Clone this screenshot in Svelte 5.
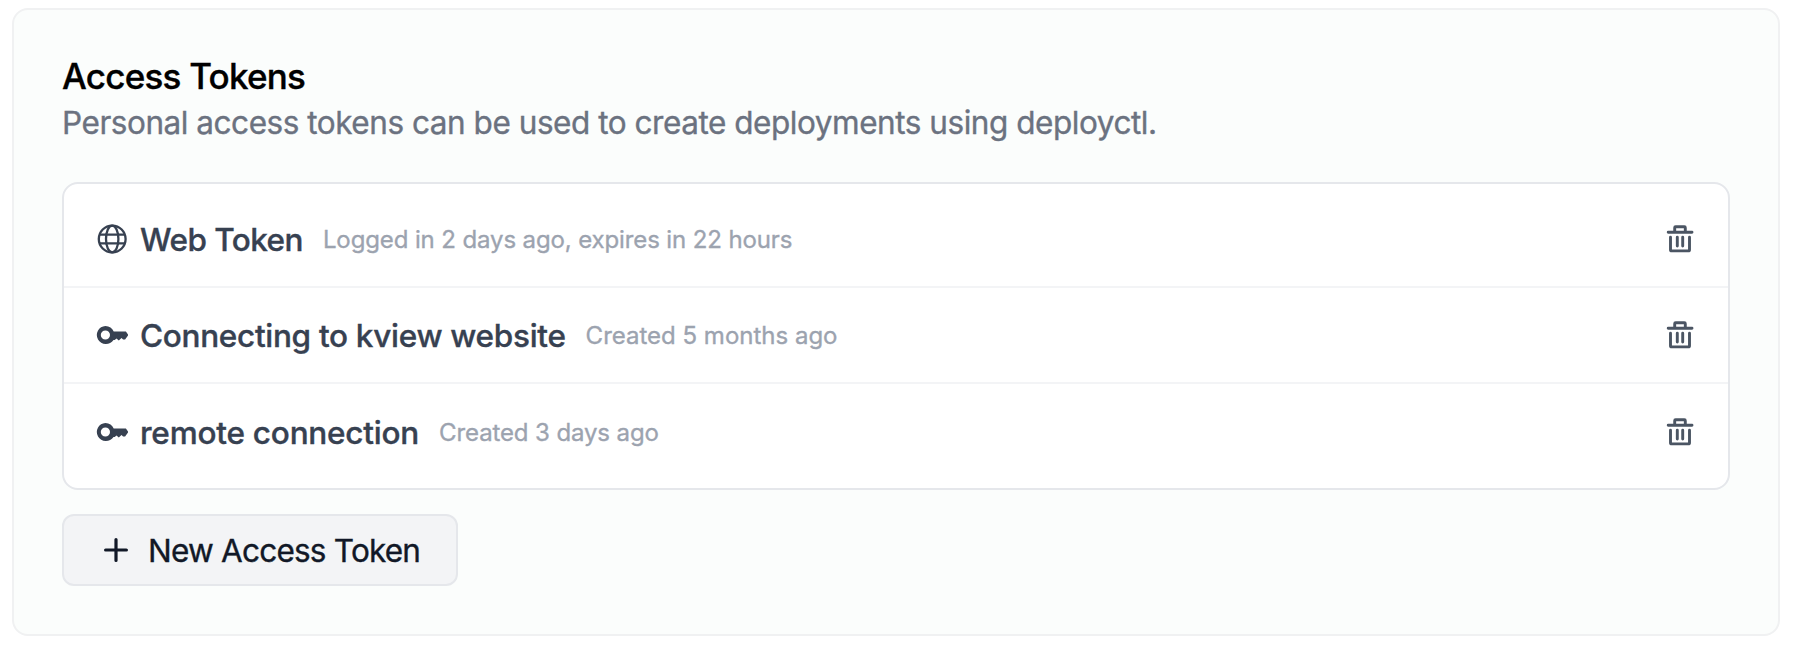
<script>
  const tokens = [
    { icon: 'globe', name: 'Web Token', meta: 'Logged in 2 days ago, expires in 22 hours', tracking: -0.55, metaTracking: -0.12 },
    { icon: 'key', name: 'Connecting to kview website', meta: 'Created 5 months ago', tracking: -0.3, metaTracking: 0 },
    { icon: 'key', name: 'remote connection', meta: 'Created 3 days ago', tracking: -0.22, metaTracking: -0.12 }
  ];
</script>

<section class="card">
  <h2>Access Tokens</h2>
  <p class="desc">Personal access tokens can be used to create deployments using deployctl.</p>

  <ul class="list">
    {#each tokens as token}
      <li>
        {#if token.icon === 'globe'}
          <svg class="icon" viewBox="0 0 32 32" fill="none" stroke="currentColor" stroke-width="2.3">
            <circle cx="16.2" cy="16" r="13.4" />
            <ellipse cx="16.2" cy="16" rx="6.2" ry="13.4" />
            <path d="M3.6 11.7h25.2M3.6 20.3h25.2" />
          </svg>
        {:else}
          <svg class="icon" viewBox="0 0 32 32" fill="currentColor">
            <path transform="translate(.4 .5)" fill-rule="evenodd" d="M9 6.400a9.100 9.100 0 0 1 8.300 5.700h12.200L32 15.600l-3.300 4.300h-2l-1.600-1.400-2.700 2.600-2.300-2.100-1.800 1.500h-1.200A9.100 9.100 0 1 1 9 6.400Zm0 4.500a4.600 4.600 0 1 0 0 9.200 4.600 4.600 0 0 0 0-9.200Z" />
          </svg>
        {/if}
        <span class="name" style:letter-spacing="{token.tracking}px">{token.name}</span>
        <span class="meta" style:letter-spacing="{token.metaTracking}px">{token.meta}</span>
        <button class="delete" aria-label="Delete">
          <svg viewBox="0 0 28 30" fill="none" stroke="currentColor" stroke-width="2.9" stroke-linecap="round" stroke-linejoin="round">
            <path d="M2.200 8.300h23.800M8.700 8V3.700q0-.900.900-.900h8.800q.900 0 .900.900V8M4.500 13.300v12.400q0 1.200 1.200 1.200h16.600q1.200 0 1.200-1.200V13.300M11.300 13.300v8.700M16.700 13.300v8.700" />
          </svg>
        </button>
      </li>
    {/each}
  </ul>

  <button class="add">
    <svg viewBox="0 0 24 24" fill="none" stroke="currentColor" stroke-width="3.2" stroke-linecap="round">
      <path d="M12 1.600v20.800M1.600 12h20.800" />
    </svg>
    <span>New Access Token</span>
  </button>
</section>

<style>
  :global(body) {
    background: #fff;
  }
  .card {
    box-sizing: border-box;
    width: 1768px;
    height: 628px;
    margin: 8px 0 0 12px;
    padding: 45px 48px;
    border: 2px solid #f0f1f2;
    border-radius: 16px;
    background: #fbfdfc;
    font-family: Inter, sans-serif;
    -webkit-text-stroke: 0.35px currentColor;
  }
  h2 {
    margin: 0;
    font-size: 35px;
    font-weight: 500;
    line-height: 42px;
    letter-spacing: -0.76px;
    color: #000;
  }
  .desc {
    margin: 0;
    padding-top: 2px;
    font-size: 31.5px;
    line-height: 48px;
    letter-spacing: -0.46px;
    color: #6b7280;
  }
  .list {
    margin: 35px 0 24px;
    padding: 8px 0;
    list-style: none;
    border: 2px solid #e5e7eb;
    border-radius: 16px;
    background: #fff;
  }
  li {
    box-sizing: border-box;
    display: flex;
    align-items: center;
    height: 96px;
    padding: 0 32px;
    border-bottom: 2px solid #f3f4f6;
    color: #374151;
  }
  li:last-child {
    border-bottom: 0;
  }
  .icon {
    flex: none;
    width: 32px;
    height: 32px;
    margin-right: 12px;
  }
  .name {
    font-size: 31.5px;
    font-weight: 500;
    white-space: nowrap;
  }
  .meta {
    margin-left: 20px;
    font-size: 24px;
    color: #9ca3af;
    white-space: nowrap;
  }
  button {
    font-family: inherit;
    cursor: pointer;
  }
  .delete {
    display: flex;
    margin-left: auto;
    padding: 0 2px;
    border: 0;
    background: none;
    color: #4b5563;
  }
  .delete svg {
    width: 28px;
    height: 30px;
  }
  .add {
    box-sizing: border-box;
    display: flex;
    align-items: center;
    gap: 20px;
    width: 396px;
    height: 72px;
    padding: 0 0 0 40px;
    border: 2px solid #e5e7eb;
    border-radius: 12px;
    background: #f3f4f6;
    color: #111827;
    font-size: 31.5px;
    letter-spacing: -0.78px;
    white-space: nowrap;
  }
  .add svg {
    width: 24px;
    height: 24px;
  }
</style>
